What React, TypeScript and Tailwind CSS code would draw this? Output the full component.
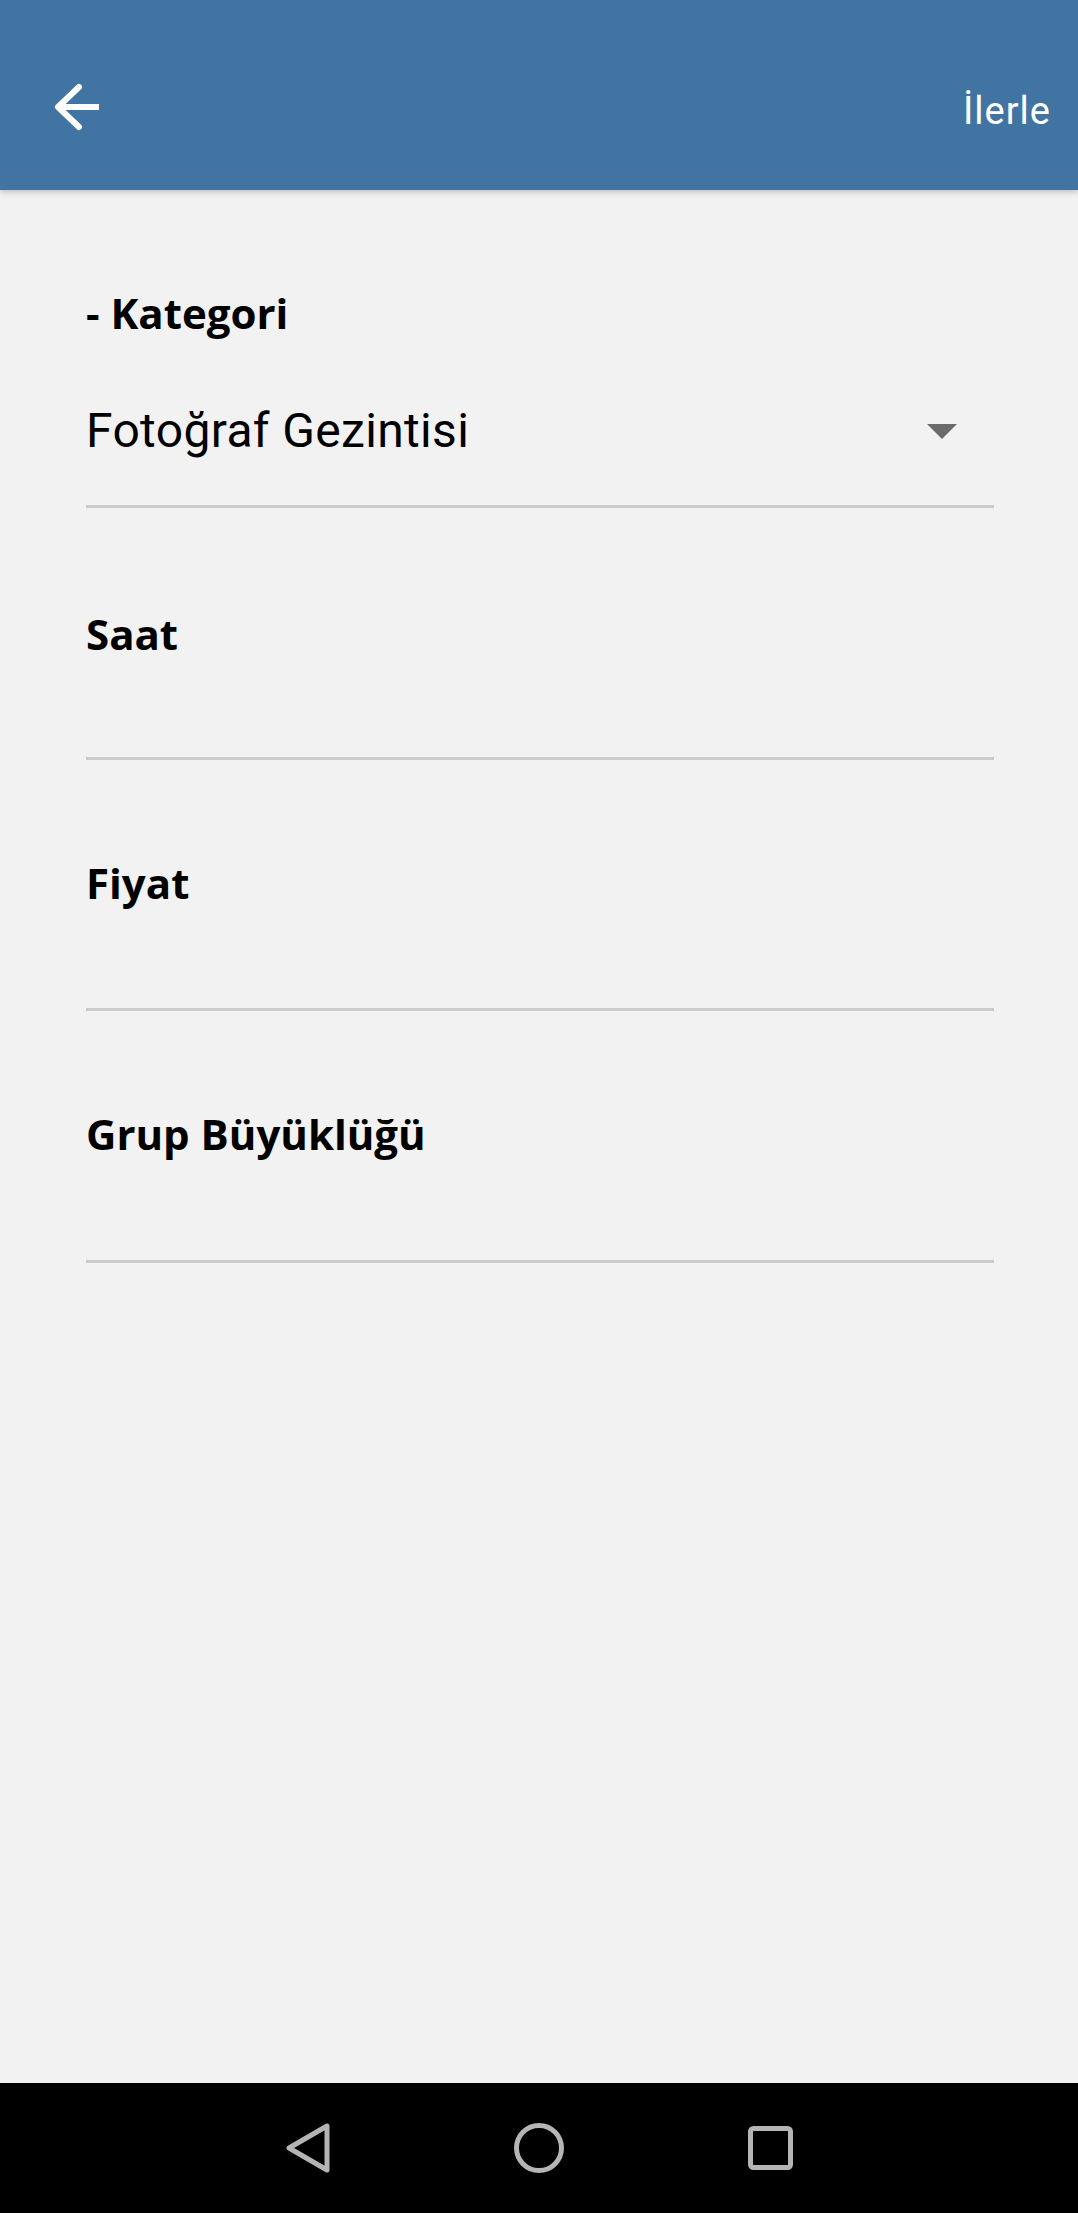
import React from "react";

function Field({
  label,
  wrapClass,
  children,
}: {
  label: string;
  wrapClass: string;
  children?: React.ReactNode;
}) {
  return (
    <div className={wrapClass}>
      <div className="h-[42px] text-[42px] leading-[42px] font-bold text-black [font-family:'Open_Sans',sans-serif] whitespace-nowrap">
        {label}
      </div>
      {children}
    </div>
  );
}

export default function App() {
  return (
    <div className="w-[1078px] h-[2213px] flex flex-col bg-[#f2f2f2] overflow-hidden">
      <header className="relative z-10 h-[190px] shrink-0 bg-[#4174a3] pt-[24px] pl-[54px] pr-[27px] flex items-center justify-between shadow-[0_2px_6px_rgba(0,0,0,0.22)]">
        <svg width="48" height="48" viewBox="0 0 48 48" fill="none" className="overflow-visible">
          <polyline
            points="25,4 4,24 25,44"
            stroke="white"
            strokeWidth="6"
            strokeLinecap="round"
            strokeLinejoin="round"
          />
          <line x1="4" y1="24" x2="45" y2="24" stroke="white" strokeWidth="6" strokeLinecap="butt" />
        </svg>
        <span className="pt-[8px] text-[38px] leading-[38px] tracking-[1px] text-white [font-family:Roboto,sans-serif]">
          İlerle
        </span>
      </header>

      <main className="flex-1 pt-[102px] pl-[86px] pr-[84px]">
        <Field label="- Kategori" wrapClass="pb-[46px] border-b-[3px] border-[#cbcbcb]">
          <div className="mt-[69px] h-[56px] flex items-center justify-between pr-[37px]">
            <span className="text-[48px] leading-[56px] tracking-[0.35px] text-black [font-family:Roboto,sans-serif] whitespace-nowrap">
              Fotoğraf Gezintisi
            </span>
            <svg width="30" height="15" viewBox="0 0 30 15">
              <polygon points="0,0 30,0 15,15" fill="#6b6b6b" />
            </svg>
          </div>
        </Field>
        <Field label="Saat" wrapClass="mt-[105px] pb-[102px] border-b-[3px] border-[#cbcbcb]" />
        <Field label="Fiyat" wrapClass="mt-[102px] pb-[104px] border-b-[3px] border-[#cbcbcb]" />
        <Field label="Grup Büyüklüğü" wrapClass="mt-[102px] pb-[105px] border-b-[3px] border-[#cbcbcb]" />
      </main>

      <nav className="h-[130px] shrink-0 bg-black flex items-center justify-center gap-[184px]">
        <svg width="44" height="50" viewBox="0 0 44 50" fill="none">
          <polygon
            points="41,3 41,47 3,25"
            stroke="#b5b5b5"
            strokeWidth="5"
            strokeLinejoin="round"
          />
        </svg>
        <svg width="50" height="50" viewBox="0 0 50 50" fill="none">
          <circle cx="25" cy="25" r="22.5" stroke="#b5b5b5" strokeWidth="5" />
        </svg>
        <svg width="45" height="44" viewBox="0 0 45 44" fill="none">
          <rect x="2.5" y="2.5" width="40" height="39" rx="3" stroke="#b5b5b5" strokeWidth="5" />
        </svg>
      </nav>
    </div>
  );
}
